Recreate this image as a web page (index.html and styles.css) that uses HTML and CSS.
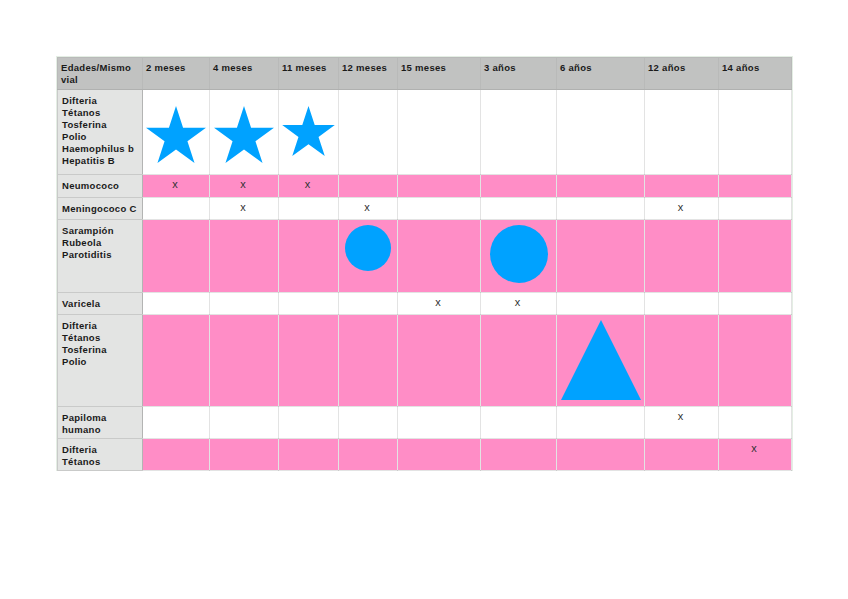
FILE: index.html
```html
<!DOCTYPE html>
<html lang="es">
<head>
<meta charset="utf-8">
<title>Calendario de vacunación</title>
<link rel="stylesheet" href="styles.css">
</head>
<body>
<div class="page">
<table class="cal">
  <colgroup>
    <col class="c0"><col class="c1"><col class="c2"><col class="c3"><col class="c4"><col class="c5"><col class="c6"><col class="c7"><col class="c8"><col class="c9">
  </colgroup>
  <thead>
    <tr class="h-head">
      <th class="lbl">Edades/Mismo vial</th>
      <th>2 meses</th><th>4 meses</th><th>11 meses</th><th>12 meses</th><th>15 meses</th><th>3 años</th><th>6 años</th><th>12 años</th><th>14 años</th>
    </tr>
  </thead>
  <tbody>
    <tr class="h-r1 white">
      <th class="lbl">Difteria<br>Tétanos<br>Tosferina<br>Polio<br>Haemophilus b<br>Hepatitis B</th>
      <td class="shape"><svg class="star s-lg" viewBox="-0.951 -1 1.902 1.809"><polygon points="0,-1 0.2245,-0.309 0.951,-0.309 0.363,0.118 0.588,0.809 0,0.382 -0.588,0.809 -0.363,0.118 -0.951,-0.309 -0.2245,-0.309"/></svg></td>
      <td class="shape"><svg class="star s-lg" viewBox="-0.951 -1 1.902 1.809"><polygon points="0,-1 0.2245,-0.309 0.951,-0.309 0.363,0.118 0.588,0.809 0,0.382 -0.588,0.809 -0.363,0.118 -0.951,-0.309 -0.2245,-0.309"/></svg></td>
      <td class="shape"><svg class="star s-sm" viewBox="-0.951 -1 1.902 1.809"><polygon points="0,-1 0.2245,-0.309 0.951,-0.309 0.363,0.118 0.588,0.809 0,0.382 -0.588,0.809 -0.363,0.118 -0.951,-0.309 -0.2245,-0.309"/></svg></td>
      <td></td><td></td><td></td><td></td><td></td><td></td>
    </tr>
    <tr class="h-r2 pink">
      <th class="lbl">Neumococo</th>
      <td class="x">x</td><td class="x">x</td><td class="x">x</td><td></td><td></td><td></td><td></td><td></td><td></td>
    </tr>
    <tr class="h-r3 white">
      <th class="lbl">Meningococo C</th>
      <td></td><td class="x">x</td><td></td><td class="x">x</td><td></td><td></td><td></td><td class="x">x</td><td></td>
    </tr>
    <tr class="h-r4 pink">
      <th class="lbl">Sarampión<br>Rubeola<br>Parotiditis</th>
      <td></td><td></td><td></td>
      <td class="shape"><div class="circle c-sm"></div></td>
      <td></td>
      <td class="shape"><div class="circle c-lg"></div></td>
      <td></td><td></td><td></td>
    </tr>
    <tr class="h-r5 white">
      <th class="lbl">Varicela</th>
      <td></td><td></td><td></td><td></td><td class="x">x</td><td class="x">x</td><td></td><td></td><td></td>
    </tr>
    <tr class="h-r6 pink">
      <th class="lbl">Difteria<br>Tétanos<br>Tosferina<br>Polio</th>
      <td></td><td></td><td></td><td></td><td></td><td></td>
      <td class="shape"><svg class="tri" viewBox="0 0 80 80"><polygon points="40,0 80,80 0,80"/></svg></td>
      <td></td><td></td>
    </tr>
    <tr class="h-r7 white">
      <th class="lbl">Papiloma<br>humano</th>
      <td></td><td></td><td></td><td></td><td></td><td></td><td></td><td class="x">x</td><td></td>
    </tr>
    <tr class="h-r8 pink">
      <th class="lbl">Difteria<br>Tétanos</th>
      <td></td><td></td><td></td><td></td><td></td><td></td><td></td><td></td><td class="x">x</td>
    </tr>
  </tbody>
</table>
</div>
</body>
</html>
```

FILE: styles.css
```css
html, body {
  margin: 0;
  padding: 0;
  background: #ffffff;
}

.page {
  padding: 57px 0 0 57px;
}

.cal {
  border-collapse: collapse;
  table-layout: fixed;
  width: 734px;
  font-family: "Liberation Sans", Arial, sans-serif;
  font-size: 9.5px;
  line-height: 12px;
  letter-spacing: 0.3px;
  color: #1a1a1a;
  outline: 1px solid #e4eee4;
}

.c0 { width: 85px; }
.c1 { width: 67px; }
.c2 { width: 69px; }
.c3 { width: 60px; }
.c4 { width: 59px; }
.c5 { width: 83px; }
.c6 { width: 76px; }
.c7 { width: 88px; }
.c8 { width: 74px; }
.c9 { width: 73px; }

.cal th,
.cal td {
  padding: 5px 4px 0 4px;
  vertical-align: top;
  text-align: left;
  border: 1px solid rgba(0, 0, 0, 0.11);
  overflow: hidden;
  box-sizing: border-box;
}

.cal thead th {
  background: #c1c2c1;
  font-weight: bold;
  padding-top: 4px;
  padding-left: 3px;
  border-color: #b9bab9;
  border-bottom: 1px solid #b0b1b0;
}

.cal tbody th.lbl {
  background: #e3e4e3;
  font-weight: bold;
  border-color: #c9cac9;
  border-right-color: #b3b4b3;
}

.white td { background: #ffffff; }
.pink td { background: #ff8dc6; }

.h-head { height: 32px; }
.h-r1 { height: 85px; }
.h-r2 { height: 23px; }
.h-r3 { height: 22px; }
.h-r4 { height: 73px; }
.h-r5 { height: 22px; }
.h-r6 { height: 92px; }
.h-r7 { height: 32px; }
.h-r8 { height: 32px; }

.cal td.x {
  text-align: center;
  font-size: 11px;
  line-height: 10px;
  letter-spacing: 0;
  color: #333333;
  padding: 4px 2px 0 0;
}

.cal td.shape {
  padding: 0;
  text-align: center;
}

.star {
  display: block;
  margin: 16px auto 0 auto;
  fill: #00a2ff;
}
.s-lg { width: 60px; height: 57px; }
.s-sm { width: 53px; height: 50px; }

.circle {
  background: #00a2ff;
  border-radius: 50%;
  margin: 5px auto 0 auto;
}
.c-sm { width: 46px; height: 46px; }
.c-lg { width: 58px; height: 58px; }

.tri {
  display: block;
  width: 80px;
  height: 80px;
  margin: 5px auto 0 auto;
  fill: #00a2ff;
}
```
